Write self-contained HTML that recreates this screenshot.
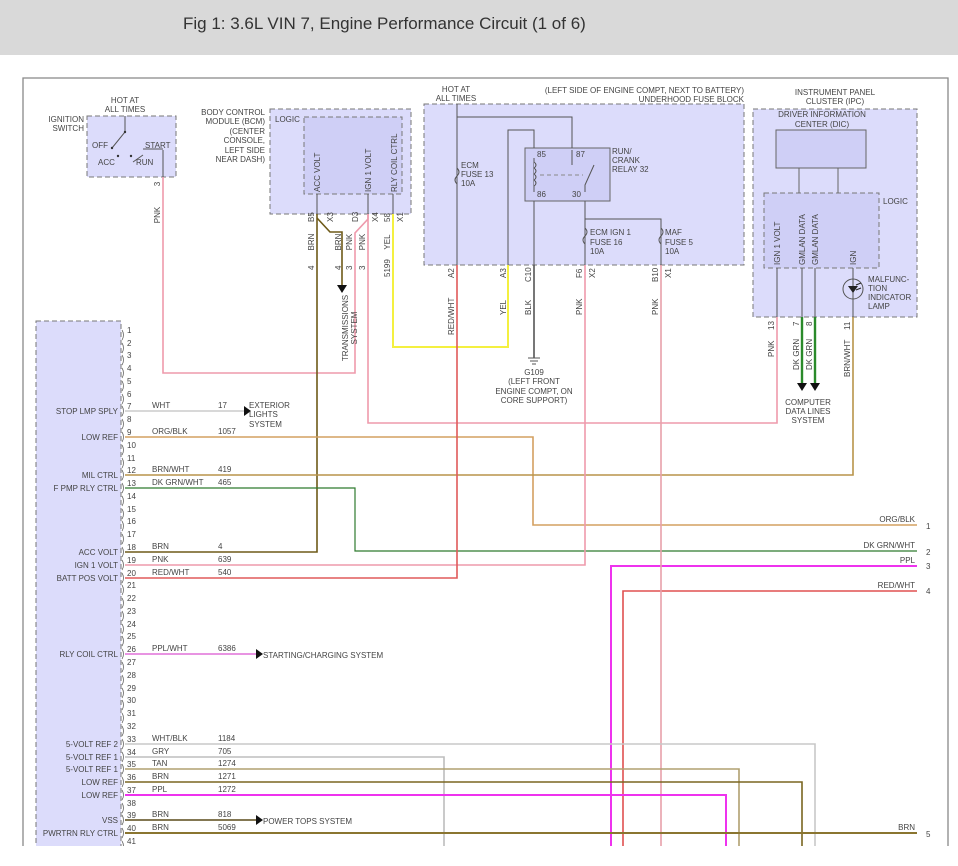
<!DOCTYPE html>
<html><head><meta charset="utf-8"><style>
html,body{margin:0;padding:0;background:#fff;width:958px;height:866px;overflow:hidden}
.hdr{position:absolute;left:0;top:0;width:958px;height:55px;background:#d9d9d9}
.hdr span{position:absolute;left:183px;top:14px;font:17px "Liberation Sans",sans-serif;color:#333}
svg{position:absolute;left:0;top:0}
text{font-family:"Liberation Sans",sans-serif;font-size:8px;fill:#444}
</style></head><body>
<div class="hdr"><span>Fig 1: 3.6L VIN 7, Engine Performance Circuit (1 of 6)</span></div>
<svg width="958" height="866" viewBox="0 0 958 866">
<clipPath id="c"><rect x="0" y="56" width="958" height="790"/></clipPath>
<g clip-path="url(#c)">
<path d="M23 846V78H948V846" fill="none" stroke="#888" stroke-width="1.3"/>
<g fill="#dcdcfb" stroke="#777" stroke-dasharray="5,3">
<rect x="87" y="116" width="89" height="61"/>
<rect x="270" y="109" width="141" height="105"/>
<rect x="424" y="104" width="320" height="161"/>
<rect x="753" y="109" width="164" height="208"/>
<rect x="36" y="321" width="85" height="540"/>
</g>
<g fill="#cfcff6" stroke="#777" stroke-dasharray="5,3">
<rect x="304" y="117" width="98" height="77"/>
<rect x="764" y="193" width="115" height="75"/>
</g>
<rect x="525" y="148" width="85" height="53" fill="#cfcff6" stroke="#666"/>
<rect x="776" y="130" width="90" height="38" fill="#cfcff6" stroke="#666"/>
<path d="M799 168V193M838 168V193" stroke="#666"/>

<path d="M125 116V132L112 148M163 150V177M143 155L133 162" stroke="#555" fill="none"/>
<circle cx="112" cy="148" r="1.2" fill="#333"/><circle cx="118" cy="156" r="1.2" fill="#333"/><circle cx="131" cy="156" r="1.2" fill="#333"/><circle cx="125" cy="132" r="1.2" fill="#333"/>
<path d="M143 149H163" stroke="#555"/>
<text x="125" y="103" text-anchor="middle">HOT AT</text><text x="125" y="112" text-anchor="middle">ALL TIMES</text>
<text x="84" y="122" text-anchor="end">IGNITION</text><text x="84" y="131" text-anchor="end">SWITCH</text>
<text x="92" y="148">OFF</text><text x="98" y="165">ACC</text><text x="145" y="148">START</text><text x="136" y="165">RUN</text>

<text x="265" y="115" text-anchor="end">BODY CONTROL</text><text x="265" y="124" text-anchor="end">MODULE (BCM)</text>
<text x="265" y="134" text-anchor="end">(CENTER</text><text x="265" y="143" text-anchor="end">CONSOLE,</text>
<text x="265" y="153" text-anchor="end">LEFT SIDE</text><text x="265" y="162" text-anchor="end">NEAR DASH)</text>
<text x="275" y="122">LOGIC</text>
<path d="M317 194V214M368 194V214M393 194V214" stroke="#555"/>
<g transform="rotate(-90)"><text x="-192" y="320">ACC VOLT</text><text x="-192" y="371">IGN 1 VOLT</text><text x="-192" y="397">RLY COIL CTRL</text></g>

<text x="456" y="92" text-anchor="middle">HOT AT</text><text x="456" y="101" text-anchor="middle">ALL TIMES</text>
<text x="744" y="93" text-anchor="end">(LEFT SIDE OF ENGINE COMPT, NEXT TO BATTERY)</text>
<text x="744" y="102" text-anchor="end">UNDERHOOD FUSE BLOCK</text>
<path d="M457 104V265M457 117H572V148M508 265V130H534V148M534 201V265M534 158V192M585 201V265M585 219H661V265M572 150V165M585 192V185L594 165" stroke="#555" fill="none"/>
<path d="M540 175H583" stroke="#888" stroke-dasharray="4,3"/>
<path d="M534 162q4 3 0 6q4 3 0 6q4 3 0 6q4 3 0 6" stroke="#555" fill="#cfcff6"/>
<g fill="#fff" stroke="#555"><path d="M457 168q4 4 0 8q-4 4 0 8" fill="none"/><path d="M585 228q4 4 0 8q-4 4 0 8" fill="none"/><path d="M661 228q4 4 0 8q-4 4 0 8" fill="none"/></g>
<text x="461" y="168">ECM</text><text x="461" y="177">FUSE 13</text><text x="461" y="186">10A</text>
<text x="537" y="157">85</text><text x="576" y="157">87</text><text x="537" y="197">86</text><text x="572" y="197">30</text>
<text x="612" y="154">RUN/</text><text x="612" y="163">CRANK</text><text x="612" y="172">RELAY 32</text>
<text x="590" y="235">ECM IGN 1</text><text x="590" y="245">FUSE 16</text><text x="590" y="254">10A</text>
<text x="665" y="235">MAF</text><text x="665" y="245">FUSE 5</text><text x="665" y="254">10A</text>

<text x="835" y="95" text-anchor="middle">INSTRUMENT PANEL</text><text x="835" y="104" text-anchor="middle">CLUSTER (IPC)</text>
<text x="822" y="117" text-anchor="middle">DRIVER INFORMATION</text><text x="822" y="127" text-anchor="middle">CENTER (DIC)</text>
<text x="883" y="204">LOGIC</text>
<path d="M777 268V317M802 268V317M815 268V317M853 268V317" stroke="#555"/>
<circle cx="853" cy="289" r="10" fill="none" stroke="#555"/>
<path d="M848 286H858L853 293Z" fill="#222"/><path d="M856 285l5-2M856 290l5-2" stroke="#222"/>
<g transform="rotate(-90)"><text x="-265" y="780">IGN 1 VOLT</text><text x="-265" y="805">GMLAN DATA</text><text x="-265" y="818">GMLAN DATA</text><text x="-265" y="856">IGN</text></g>
<text x="868" y="282">MALFUNC-</text><text x="868" y="291">TION</text><text x="868" y="300">INDICATOR</text><text x="868" y="309">LAMP</text>

<g fill="none" stroke-width="1.6">
<path d="M163 177V373H355V233L368 219V214" stroke="#ee9aac"/>
<path d="M368 214V423H777V317" stroke="#ee9aac"/>
<path d="M393 214V347H508V265" stroke="#f4f040" stroke-width="2"/>
<path d="M534 265V358" stroke="#555"/>
<path d="M317 214V552H125" stroke="#6e5a18"/>
<path d="M317 218L330 232H342V285" stroke="#6e5a18"/>
<path d="M125 411H244" stroke="#cccccc"/>
<path d="M125 437H533V525H917" stroke="#d4a060"/>
<path d="M125 475H853V317" stroke="#b8944a"/>
<path d="M125 488H355V551H917" stroke="#2e7a2e" stroke-width="1.2"/>
<path d="M125 565H585V265" stroke="#ee9aac"/>
<path d="M125 578H457V265" stroke="#e05a5a"/>
<path d="M611 846V566H917" stroke="#ee33ee" stroke-width="2"/>
<path d="M623 846V591H917" stroke="#e05050"/>
<path d="M661 265V846" stroke="#e8a0aa"/>
<path d="M125 654H256" stroke="#e070d8"/>
<path d="M125 744H815V846" stroke="#c8c8c8"/>
<path d="M125 757H444V846" stroke="#bdbdbd"/>
<path d="M125 769H739V846" stroke="#b0a070"/>
<path d="M125 782H802V846" stroke="#7a6620"/>
<path d="M125 795H726V846" stroke="#ee33ee" stroke-width="2"/>
<path d="M125 820H256" stroke="#5a4a18"/>
<path d="M125 833H917" stroke="#8a7530" stroke-width="2"/>
<path d="M802 317V383M815 317V383" stroke="#2a8a2a" stroke-width="2.4"/>
</g>
<g fill="#111">
<path d="M244 406L251 411L244 416Z"/><path d="M256 649L263 654L256 659Z"/><path d="M256 815L263 820L256 825Z"/>
<path d="M337 285H347L342 293Z"/><path d="M797 383H807L802 391Z"/><path d="M810 383H820L815 391Z"/>
</g>
<path d="M528 358H540M530 361H538M532 364H536" stroke="#555"/>
<text x="534" y="375" text-anchor="middle">G109</text><text x="534" y="384" text-anchor="middle">(LEFT FRONT</text>
<text x="534" y="394" text-anchor="middle">ENGINE COMPT, ON</text><text x="534" y="403" text-anchor="middle">CORE SUPPORT)</text>
<text x="808" y="405" text-anchor="middle">COMPUTER</text><text x="808" y="414" text-anchor="middle">DATA LINES</text><text x="808" y="423" text-anchor="middle">SYSTEM</text>
<text x="249" y="408">EXTERIOR</text><text x="249" y="417">LIGHTS</text><text x="249" y="427">SYSTEM</text>
<text x="263" y="658">STARTING/CHARGING SYSTEM</text><text x="263" y="824">POWER TOPS SYSTEM</text>

<g transform="rotate(-90)">
<text x="-184" y="160" text-anchor="middle">3</text><text x="-215" y="160" text-anchor="middle">PNK</text>
<text x="-222" y="314">B5</text><text x="-222" y="333">X3</text><text x="-222" y="358">D3</text><text x="-222" y="378">X4</text><text x="-222" y="390">58</text><text x="-222" y="403">X1</text>
<text x="-242" y="314" text-anchor="middle">BRN</text><text x="-242" y="341" text-anchor="middle">BRN</text><text x="-242" y="352" text-anchor="middle">PNK</text><text x="-242" y="365" text-anchor="middle">PNK</text><text x="-242" y="390" text-anchor="middle">YEL</text>
<text x="-270" y="314">4</text><text x="-270" y="341">4</text><text x="-270" y="352">3</text><text x="-270" y="365">3</text><text x="-277" y="390">5199</text>
<text x="-328" y="348" text-anchor="middle">TRANSMISSIONS</text><text x="-328" y="357" text-anchor="middle">SYSTEM</text>
<text x="-278" y="454">A2</text><text x="-278" y="506">A3</text><text x="-282" y="531">C10</text><text x="-278" y="582">F6</text><text x="-278" y="595">X2</text><text x="-282" y="658">B10</text><text x="-278" y="671">X1</text>
<text x="-335" y="454">RED/WHT</text><text x="-315" y="506">YEL</text><text x="-315" y="531">BLK</text><text x="-315" y="582">PNK</text><text x="-315" y="658">PNK</text>
<text x="-330" y="774">13</text><text x="-326" y="799">7</text><text x="-326" y="812">8</text><text x="-330" y="850">11</text>
<text x="-357" y="774">PNK</text><text x="-370" y="799">DK GRN</text><text x="-370" y="812">DK GRN</text><text x="-377" y="850">BRN/WHT</text>
</g>

<g text-anchor="end">
<text x="118" y="414">STOP LMP SPLY</text><text x="118" y="440">LOW REF</text><text x="118" y="478">MIL CTRL</text><text x="118" y="491">F PMP RLY CTRL</text>
<text x="118" y="555">ACC VOLT</text><text x="118" y="568">IGN 1 VOLT</text><text x="118" y="581">BATT POS VOLT</text><text x="118" y="657">RLY COIL CTRL</text>
<text x="118" y="747">5-VOLT REF 2</text><text x="118" y="760">5-VOLT REF 1</text><text x="118" y="772">5-VOLT REF 1</text><text x="118" y="785">LOW REF</text><text x="118" y="798">LOW REF</text>
<text x="118" y="823">VSS</text><text x="118" y="836">PWRTRN RLY CTRL</text>
<text x="915" y="522">ORG/BLK</text><text x="915" y="548">DK GRN/WHT</text><text x="915" y="563">PPL</text><text x="915" y="588">RED/WHT</text><text x="915" y="830">BRN</text>
</g>
<text x="926" y="529">1</text><text x="926" y="555">2</text><text x="926" y="569">3</text><text x="926" y="594">4</text><text x="926" y="837">5</text>
<g>
<text x="152" y="408">WHT</text><text x="218" y="408">17</text>
<text x="152" y="434">ORG/BLK</text><text x="218" y="434">1057</text>
<text x="152" y="472">BRN/WHT</text><text x="218" y="472">419</text>
<text x="152" y="485">DK GRN/WHT</text><text x="218" y="485">465</text>
<text x="152" y="549">BRN</text><text x="218" y="549">4</text>
<text x="152" y="562">PNK</text><text x="218" y="562">639</text>
<text x="152" y="575">RED/WHT</text><text x="218" y="575">540</text>
<text x="152" y="651">PPL/WHT</text><text x="218" y="651">6386</text>
<text x="152" y="741">WHT/BLK</text><text x="218" y="741">1184</text>
<text x="152" y="754">GRY</text><text x="218" y="754">705</text>
<text x="152" y="766">TAN</text><text x="218" y="766">1274</text>
<text x="152" y="779">BRN</text><text x="218" y="779">1271</text>
<text x="152" y="792">PPL</text><text x="218" y="792">1272</text>
<text x="152" y="817">BRN</text><text x="218" y="817">818</text>
<text x="152" y="830">BRN</text><text x="218" y="830">5069</text>
</g>
<g font-size="7.5">
<text x="127" y="333">1</text><text x="127" y="346">2</text><text x="127" y="358">3</text><text x="127" y="371">4</text><text x="127" y="384">5</text><text x="127" y="397">6</text><text x="127" y="409">7</text><text x="127" y="422">8</text><text x="127" y="435">9</text><text x="127" y="448">10</text><text x="127" y="461">11</text><text x="127" y="473">12</text><text x="127" y="486">13</text><text x="127" y="499">14</text><text x="127" y="512">15</text><text x="127" y="524">16</text><text x="127" y="537">17</text><text x="127" y="550">18</text><text x="127" y="563">19</text><text x="127" y="576">20</text><text x="127" y="588">21</text><text x="127" y="601">22</text><text x="127" y="614">23</text><text x="127" y="627">24</text><text x="127" y="639">25</text><text x="127" y="652">26</text><text x="127" y="665">27</text><text x="127" y="678">28</text><text x="127" y="691">29</text><text x="127" y="703">30</text><text x="127" y="716">31</text><text x="127" y="729">32</text><text x="127" y="742">33</text><text x="127" y="755">34</text><text x="127" y="767">35</text><text x="127" y="780">36</text><text x="127" y="793">37</text><text x="127" y="806">38</text><text x="127" y="818">39</text><text x="127" y="831">40</text><text x="127" y="844">41</text>
</g>
<path d="M122 330q3 5 0 10M122 343q3 5 0 10M122 355q3 5 0 10M122 368q3 5 0 10M122 381q3 5 0 10M122 394q3 5 0 10M122 406q3 5 0 10M122 419q3 5 0 10M122 432q3 5 0 10M122 445q3 5 0 10M122 458q3 5 0 10M122 470q3 5 0 10M122 483q3 5 0 10M122 496q3 5 0 10M122 509q3 5 0 10M122 521q3 5 0 10M122 534q3 5 0 10M122 547q3 5 0 10M122 560q3 5 0 10M122 573q3 5 0 10M122 585q3 5 0 10M122 598q3 5 0 10M122 611q3 5 0 10M122 624q3 5 0 10M122 636q3 5 0 10M122 649q3 5 0 10M122 662q3 5 0 10M122 675q3 5 0 10M122 688q3 5 0 10M122 700q3 5 0 10M122 713q3 5 0 10M122 726q3 5 0 10M122 739q3 5 0 10M122 752q3 5 0 10M122 764q3 5 0 10M122 777q3 5 0 10M122 790q3 5 0 10M122 803q3 5 0 10M122 815q3 5 0 10M122 828q3 5 0 10M122 841q3 5 0 10" fill="none" stroke="#666" stroke-width="0.8"/>
</g>
</svg>
</body></html>
